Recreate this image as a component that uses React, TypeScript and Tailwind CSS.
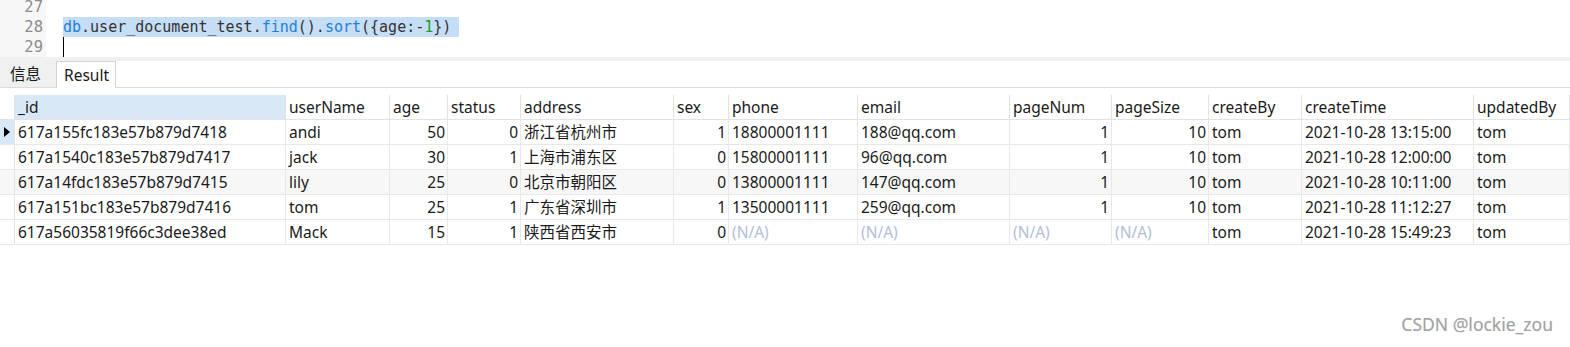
import React from 'react'

type Row = {
  id: string
  userName: string
  age: number
  status: number
  address: string
  sex: number
  phone?: string
  email?: string
  pageNum?: number
  pageSize?: number
  createBy: string
  createTime: string
  updatedBy: string
}

const rows: Row[] = [
  { id: '617a155fc183e57b879d7418', userName: 'andi', age: 50, status: 0, address: '浙江省杭州市', sex: 1, phone: '18800001111', email: '188@qq.com', pageNum: 1, pageSize: 10, createBy: 'tom', createTime: '2021-10-28 13:15:00', updatedBy: 'tom' },
  { id: '617a1540c183e57b879d7417', userName: 'jack', age: 30, status: 1, address: '上海市浦东区', sex: 0, phone: '15800001111', email: '96@qq.com', pageNum: 1, pageSize: 10, createBy: 'tom', createTime: '2021-10-28 12:00:00', updatedBy: 'tom' },
  { id: '617a14fdc183e57b879d7415', userName: 'lily', age: 25, status: 0, address: '北京市朝阳区', sex: 0, phone: '13800001111', email: '147@qq.com', pageNum: 1, pageSize: 10, createBy: 'tom', createTime: '2021-10-28 10:11:00', updatedBy: 'tom' },
  { id: '617a151bc183e57b879d7416', userName: 'tom', age: 25, status: 1, address: '广东省深圳市', sex: 1, phone: '13500001111', email: '259@qq.com', pageNum: 1, pageSize: 10, createBy: 'tom', createTime: '2021-10-28 11:12:27', updatedBy: 'tom' },
  { id: '617a56035819f66c3dee38ed', userName: 'Mack', age: 15, status: 1, address: '陕西省西安市', sex: 0, createBy: 'tom', createTime: '2021-10-28 15:49:23', updatedBy: 'tom' },
]

const cols: { key: keyof Row; label: string; w: string; num?: boolean }[] = [
  { key: 'id', label: '_id', w: 'w-[271px]' },
  { key: 'userName', label: 'userName', w: 'w-[104px]' },
  { key: 'age', label: 'age', w: 'w-[58px]', num: true },
  { key: 'status', label: 'status', w: 'w-[73px]', num: true },
  { key: 'address', label: 'address', w: 'w-[153px]' },
  { key: 'sex', label: 'sex', w: 'w-[55px]', num: true },
  { key: 'phone', label: 'phone', w: 'w-[129px]' },
  { key: 'email', label: 'email', w: 'w-[152px]' },
  { key: 'pageNum', label: 'pageNum', w: 'w-[102px]', num: true },
  { key: 'pageSize', label: 'pageSize', w: 'w-[97px]', num: true },
  { key: 'createBy', label: 'createBy', w: 'w-[93px]' },
  { key: 'createTime', label: 'createTime', w: 'w-[172px]' },
  { key: 'updatedBy', label: 'updatedBy', w: 'w-[96px]' },
]

export default function App() {
  return (
    <div className="relative w-[1570px] h-[347px] overflow-hidden bg-white text-[#1a1a1a] font-['Noto_Sans','Noto_Sans_CJK_SC',sans-serif]">
      {/* editor */}
      <div className="flex h-[57px] overflow-hidden">
        <div className="w-[46px] shrink-0 bg-[#f7f7f7] text-right pr-[3px] text-[15.5px] text-[#8c8c8c] font-['DejaVu_Sans_Mono',monospace]">
          <div className="-mt-[3px]">
            <div className="h-[20px] leading-[20px]">27</div>
            <div className="h-[20px] leading-[20px]">28</div>
            <div className="h-[20px] leading-[20px]">29</div>
          </div>
        </div>
        <div className="pl-[17px] font-['DejaVu_Sans_Mono',monospace] text-[15px] text-[#333]">
          <div className="h-[17px]" />
          <div className="h-[20px] leading-[20px] bg-[#c6ddf6] pr-[8px] whitespace-pre">
            <span className="text-[#1d7fd8]">db</span>.user_document_test.
            <span className="text-[#1d7fd8]">find</span>().
            <span className="text-[#1d7fd8]">sort</span>({'{'}age:-
            <span className="text-[#1c9e2b]">1</span>{'})'}
          </div>
          <div className="h-[20px] w-[1px] bg-black" />
        </div>
      </div>

      <div className="h-[4px] bg-[#f0f0f0]" />

      {/* tabs */}
      <div className="flex h-[27px] border-b border-[#dcdcdc] text-[15.5px]">
        <div className="w-[56px] bg-[#f0f0f0] pl-[10px] leading-[26px]">信息</div>
        <div className="w-[60px] border-x border-t border-[#d4d4d4] bg-white pl-[7px] leading-[26px] -mb-[1px]">Result</div>
      </div>

      <div className="h-[7px]" />

      {/* grid */}
      <div className="text-[15.5px]">
        <div className="flex h-[25px] border-b border-[#e3e3e3]">
          <div className="w-[15px] shrink-0 border-r border-[#e3e3e3]" />
          {cols.map((c, i) => (
            <div
              key={c.key}
              className={`${c.w} shrink-0 border-r border-[#e3e3e3] pl-[3px] leading-[24px] whitespace-nowrap ${i === 0 ? 'bg-[#d9e8f7]' : ''}`}
            >
              {c.label}
            </div>
          ))}
        </div>
        {rows.map((r, ri) => (
          <div key={r.id} className={`flex h-[25px] border-b border-[#e8e8e8] ${ri === 2 ? 'bg-[#f7f7f7]' : ''}`}>
            <div className={`w-[15px] shrink-0 border-r border-[#e3e3e3] flex items-center justify-center ${ri === 0 ? 'bg-[#d9e8f7]' : ''}`}>
              {ri === 0 && (
                <svg width="6" height="10" viewBox="0 0 6 10">
                  <path d="M0 0 L6 5 L0 10 Z" fill="#000" />
                </svg>
              )}
            </div>
            {cols.map((c) => {
              const v = r[c.key]
              const na = v === undefined
              return (
                <div
                  key={c.key}
                  className={`${c.w} shrink-0 border-r border-[#e8e8e8] leading-[24px] whitespace-nowrap overflow-hidden ${
                    c.num && !na ? 'text-right pr-[2px]' : 'pl-[3px]'
                  } ${na ? 'text-[#b2bed8]' : ''}`}
                >
                  {na ? '(N/A)' : v}
                </div>
              )
            })}
          </div>
        ))}
      </div>

      <div className="absolute right-[17px] bottom-[10px] text-[17.5px] text-[#a3a3a3] [text-shadow:0_0_1px_#ddd]">
        CSDN @lockie_zou
      </div>
    </div>
  )
}
